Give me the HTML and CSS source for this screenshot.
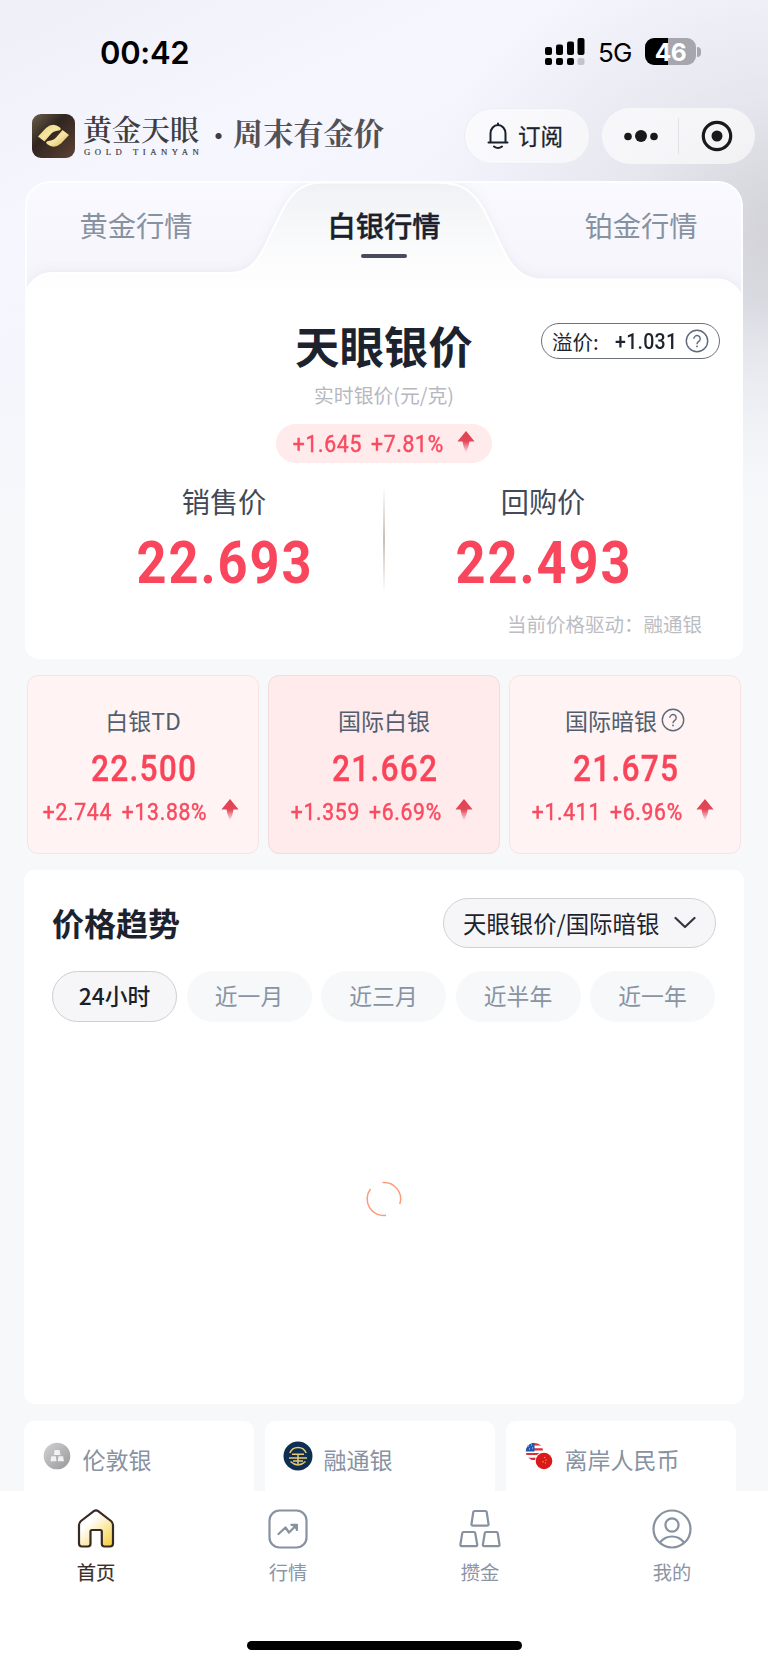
FILE: index.html
```html
<!DOCTYPE html>
<html lang="zh-CN">
<head>
<meta charset="utf-8">
<title>黄金天眼</title>
<link rel="stylesheet" href="styles.css">
</head>
<body>
<svg class="defs" width="0" height="0" aria-hidden="true">
  <defs>
    <linearGradient id="arrow-fill" x1="0" y1="0" x2="0" y2="1"><stop offset="0" stop-color="#e2404f"/><stop offset=".48" stop-color="#e2485a"/><stop offset="1" stop-color="#e2485a" stop-opacity="0"/></linearGradient>
    <symbol id="arrow" viewBox="0 0 18 22"><path d="M9 0 17.600 10.500H12.500Q11.800 16 9 22 6.200 16 5.500 10.500H.4Z" fill="url(#arrow-fill)"/></symbol>
    <symbol id="help" viewBox="0 0 24 24"><circle cx="12" cy="12" r="10.700" fill="none" stroke="#5b697b" stroke-width="1.400"/><path d="M8.800 9.700a3.200 3.200 0 1 1 5 2.700c-1.300.9-1.800 1.400-1.800 2.800" fill="none" stroke="#5b697b" stroke-width="1.400"/><circle cx="12" cy="17.400" r=".9" fill="#5b697b"/></symbol>
  </defs>
</svg>
<div class="screen">
  <div class="status">
    <span class="time">00:42</span>
    <div class="status-right">
      <svg width="40" height="28" viewBox="0 0 40 28"><rect x="0" y="9" width="7" height="8" rx="2"/><rect x="11" y="6.500" width="7" height="10.500" rx="2"/><rect x="22" y="3.500" width="7" height="13.500" rx="2"/><rect x="32.500" y="0" width="7" height="17" rx="2"/><rect x="0" y="20" width="7" height="7" rx="2"/><rect x="11" y="20" width="7" height="7" rx="2"/><rect x="22" y="20" width="7" height="7" rx="2"/><rect x="32.500" y="20" width="7" height="7" rx="2" fill="#c3c3cc"/></svg>
      <span class="net">5G</span>
      <span class="battery">46</span><i class="battery-cap"></i>
    </div>
  </div>

  <header class="header">
    <svg class="logo" width="43" height="44" viewBox="0 0 43 44">
      <defs><linearGradient id="logo-bg" x1="0" y1="0" x2="1" y2="1"><stop offset="0" stop-color="#6b5f4b"/><stop offset=".4" stop-color="#30251f"/><stop offset="1" stop-color="#5d4335"/></linearGradient><linearGradient id="gold" x1="0" y1="0" x2="1" y2="1"><stop offset="0" stop-color="#e9cf6a"/><stop offset=".5" stop-color="#f6e6a6"/><stop offset="1" stop-color="#d6ab3c"/></linearGradient></defs>
      <rect width="43" height="44" rx="9" fill="url(#logo-bg)"/>
      <path d="M6 22.500 14 14Q21 8 28 13.500 30 15.500 27 16.500 21 17 18.500 20.500L12.500 27.500Z" fill="url(#gold)"/>
      <path d="M37 21 29 29.500Q22 35.500 15 30 13 28 16 27 22 26.500 24.500 23L30.500 16Z" fill="url(#gold)"/>
    </svg>
    <div class="brand"><span class="brand-cn">黄金天眼</span><span class="brand-en">GOLD TIANYAN</span></div>
    <span class="brand-dot">·</span>
    <span class="slogan">周末有金价</span>
    <div class="subscribe">
      <svg width="22" height="28" viewBox="0 0 22 28" fill="none" stroke="#17202b" stroke-width="2" stroke-linecap="round" stroke-linejoin="round"><path d="M11 1.500V3M3.500 20V11.500a7.500 8.500 0 0 1 15 0V20M1.500 20.500h19M7 24.500q4 3 8 0"/></svg>
      <span>订阅</span>
    </div>
    <div class="capsule">
      <svg width="34" height="14" viewBox="0 0 34 14" fill="#191919"><circle cx="4" cy="7.500" r="3.800"/><circle cx="17" cy="7" r="6"/><circle cx="30" cy="7.500" r="3.800"/></svg>
      <i class="capsule-line"></i>
      <svg width="32" height="32" viewBox="0 0 32 32"><circle cx="16" cy="16" r="13.700" fill="none" stroke="#191919" stroke-width="3.200"/><circle cx="16" cy="16" r="5.500" fill="#191919"/></svg>
    </div>
  </header>

  <main class="content">
    <section class="hero">
      <svg class="hero-bg" width="718" height="140" viewBox="0 0 718 140">
        <defs>
          <linearGradient id="back" x1="0" y1="0" x2="0" y2="1"><stop offset="0" stop-color="#faf9ff"/><stop offset="1" stop-color="#f4f3fa"/></linearGradient>
          <linearGradient id="front" x1="0" y1="0" x2="0" y2="140" gradientUnits="userSpaceOnUse"><stop offset="0" stop-color="#f0f1f4"/><stop offset=".35" stop-color="#f7f8f9"/><stop offset=".62" stop-color="#fdfdfe"/><stop offset=".85" stop-color="#fff"/></linearGradient>
          <filter id="soft" x="-5%" y="-20%" width="110%" height="140%"><feDropShadow dx="0" dy="-2" stdDeviation="4" flood-color="#8f8bb0" flood-opacity=".1"/></filter>
          <clipPath id="hero-clip"><path d="M0 140V25A25 25 0 0 1 25 0H693A25 25 0 0 1 718 25V140Z"/></clipPath>
        </defs>
        <g clip-path="url(#hero-clip)">
          <path d="M0 140V25A25 25 0 0 1 25 0H693A25 25 0 0 1 718 25V140Z" fill="url(#back)"/>
          <path d="M0 140V118A27 27 0 0 1 27 92H204C222 92 231 83 239 67C247 51 253 37 261 23C270 8 281 1.500 298 1.500H408C430 1.500 444 5 456 24C466 41 473 60 482 76C490 90 500 98.500 516 98.500H692A26 26 0 0 1 718 122V140Z" fill="url(#front)" stroke="#fff" stroke-width="2" filter="url(#soft)"/>
        </g>
        <path d="M1 118V25A24 24 0 0 1 25 1H693A24 24 0 0 1 717 25V118" fill="none" stroke="#fff" stroke-width="1.600"/>
      </svg>
      <nav class="tabs"><span>黄金行情</span><span class="tab-on">白银行情</span><span>铂金行情</span></nav>
      <div class="title-row">
        <h1>天眼银价</h1>
        <div class="premium"><span>溢价:</span><b>+1.031</b><svg width="24" height="24"><use href="#help"/></svg></div>
      </div>
      <p class="unit">实时银价(元/克)</p>
      <div class="change change-pill"><span>+1.645</span><span>+7.81%</span><svg width="18" height="22"><use href="#arrow"/></svg></div>
      <div class="prices">
        <div class="price"><span>销售价</span><strong>22.693</strong></div>
        <i class="price-line"></i>
        <div class="price"><span>回购价</span><strong>22.493</strong></div>
      </div>
      <p class="driver">当前价格驱动：融通银</p>
    </section>

    <section class="quotes">
      <article class="quote"><h3>白银TD</h3><strong>22.500</strong><div class="change"><span>+2.744</span><span>+13.88%</span><svg width="18" height="22"><use href="#arrow"/></svg></div></article>
      <article class="quote quote-on"><h3>国际白银</h3><strong>21.662</strong><div class="change"><span>+1.359</span><span>+6.69%</span><svg width="18" height="22"><use href="#arrow"/></svg></div></article>
      <article class="quote"><h3>国际暗银<svg width="24" height="24"><use href="#help"/></svg></h3><strong>21.675</strong><div class="change"><span>+1.411</span><span>+6.96%</span><svg width="18" height="22"><use href="#arrow"/></svg></div></article>
    </section>

    <section class="trend">
      <div class="trend-head"><h2>价格趋势</h2>
        <div class="select"><span>天眼银价/国际暗银</span><svg width="22" height="14" viewBox="0 0 22 14" fill="none" stroke="#33363f" stroke-width="2.200" stroke-linecap="round" stroke-linejoin="round"><path d="M1.500 2 11 11 20.500 2"/></svg></div>
      </div>
      <div class="chips"><span class="chip chip-on">24小时</span><span class="chip">近一月</span><span class="chip">近三月</span><span class="chip">近半年</span><span class="chip">近一年</span></div>
      <div class="chart"><svg width="36" height="36" viewBox="0 0 36 36" fill="none" stroke="#fb9b78" stroke-width="1.500"><path d="M16.500 1.600A16.500 16.500 0 0 1 33.800 23"/><path d="M20 34.300A16.500 16.500 0 0 1 4.500 8"/></svg></div>
    </section>

    <section class="markets">
      <article class="market">
        <svg width="30" height="30" viewBox="0 0 30 30"><defs><linearGradient id="silver" x1="0" y1="0" x2="1" y2="1"><stop offset="0" stop-color="#d2d2d4"/><stop offset="1" stop-color="#98989b"/></linearGradient></defs><circle cx="15" cy="15" r="13.300" fill="url(#silver)"/><path d="M12.700 9h4.800l1 5h-6.800ZM9.300 15.200h4.500l.7 5H8.400ZM16.500 15.200H21l1 5h-6.200Z" fill="#f1f1f2"/></svg><span>伦敦银</span>
      </article>
      <article class="market">
        <svg width="30" height="30" viewBox="0 0 30 30" fill="none" stroke="#e8c874" stroke-width="1.500"><circle cx="15" cy="15" r="14.500" fill="#0e2e52" stroke="none"/><path d="M6.800 12a8.800 8.800 0 0 1 16.400 0M9 13.200h12M6 17h18M15 13v10M10 20h10M7.500 20.500q7.500 7 15 0"/></svg><span>融通银</span>
      </article>
      <article class="market">
        <svg width="30" height="30" viewBox="0 0 30 30"><defs><clipPath id="us"><circle cx="10.500" cy="10.500" r="8.700"/></clipPath></defs><g clip-path="url(#us)"><path fill="#fff" d="M1 1h20v20H1z"/><path d="M1 3.300h19M1 8.300h19M1 13h19M1 17.800h19" stroke="#dc2c35" stroke-width="2.200"/><path fill="#1d57b5" d="M1 1h9.500v9.500H1z"/><path d="M4 5h.8M7 4h.8M5 8h.8M8 7h.8" stroke="#fff"/></g><circle cx="20" cy="20" r="9.200" fill="#fff"/><circle cx="20" cy="20" r="8.300" fill="#d91a1a"/><path d="M20 16.500h1.200M22 18.500v1.200M21.500 21.500v1M19 20v1.500" stroke="#f1bd35"/></svg><span>离岸人民币</span>
      </article>
    </section>
  </main>

  <footer class="tabbar">
    <div class="tab-item tab-home"><svg width="42" height="42" viewBox="0 0 42 42"><defs><linearGradient id="home" x1=".2" y1=".1" x2="1" y2="1"><stop offset=".2" stop-color="#fff"/><stop offset="1" stop-color="#f6cd33"/></linearGradient></defs><path d="M18.800 3.200Q21 1.500 23.200 3.200L36 13Q38 14.700 38 17V35.500Q38 38.500 35 38.500H29.500Q26.800 38.500 26.800 35.800V23.500Q26.800 22 25.300 22H17Q15.500 22 15.500 23.500V35.800Q15.500 38.500 12.800 38.500H7Q4 38.500 4 35.500V17Q4 14.700 6 13Z" fill="url(#home)" stroke="#372a25" stroke-width="2.200"/></svg><span>首页</span></div>
    <div class="tab-item"><svg width="42" height="42" viewBox="0 0 42 42" fill="none" stroke="#8792a1" stroke-width="2.200"><rect x="2.500" y="2.500" width="37" height="37" rx="10"/><path d="M11.500 26 18.500 19.500 22 24.500 29 17.500M24.500 16.800H29.800V22" stroke-linejoin="round" stroke-linecap="round"/><path d="M26 17H29.700V20.500Z" fill="#8792a1"/></svg><span>行情</span></div>
    <div class="tab-item"><svg width="42" height="42" viewBox="0 0 42 42" fill="none" stroke="#8792a1" stroke-width="2.200" stroke-linejoin="round"><path d="M15.500 3H26.500Q27.500 3 27.700 4L29.500 16Q29.700 17.700 28 17.700H14Q12.300 17.700 12.500 16L14.300 4Q14.500 3 15.500 3Z"/><path d="M4.500 24H15Q16 24 16.200 25L18.200 36.500Q18.500 38.200 16.800 38.200H2.800Q1.100 38.200 1.400 36.500L3.300 25Q3.500 24 4.500 24Z"/><path d="M27 24H37.500Q38.500 24 38.700 25L40.500 36.500Q40.800 38.200 39.100 38.200H25.300Q23.600 38.200 23.900 36.500L25.800 25Q26 24 27 24Z"/></svg><span>攒金</span></div>
    <div class="tab-item"><svg width="42" height="42" viewBox="0 0 42 42" fill="none" stroke="#8792a1" stroke-width="2.200"><circle cx="21" cy="21" r="18.500"/><circle cx="21" cy="17" r="6.600"/><path d="M9 34.500Q13.500 28.500 21 28.500T33 34.500"/></svg><span>我的</span></div>
    <i class="home-indicator"></i>
  </footer>
</div>
</body>
</html>
```

FILE: styles.css
```css
* { box-sizing: border-box; margin: 0; padding: 0; }
body { width: 768px; height: 1665px; overflow: hidden; font-family: "Noto Sans CJK SC", sans-serif; color: #1d232e; }
i { font-style: normal; }
svg { flex: none; display: block; }
.defs { position: absolute; }
.screen {
  width: 768px; height: 1665px; display: flex; flex-direction: column;
  background:
    linear-gradient(to bottom, rgba(247,248,250,0) 300px, #f6f8fa 500px),
    radial-gradient(380px 300px at 800px 230px, rgba(198,198,202,.75), rgba(214,214,220,.45) 45%, rgba(230,230,240,0)),
    linear-gradient(155deg, #efeff8 0, #f6f6fe 220px, #f3f3fd 420px, #e9e9f4 600px, #f2f3f8 900px);
}
.status { flex: none; height: 104px; display: flex; justify-content: space-between; padding: 34px 67px 0 100px; }
.time { font: 600 31px/37px Inter, sans-serif; letter-spacing: -.3px; color: #000; }
.status-right { display: flex; align-items: flex-start; height: 34px; padding-top: 4px; }
.net { font: 400 26px/30px Inter, sans-serif; margin-left: 13px; width: 36px; letter-spacing: -.8px; color: #000; }
.battery { margin-left: 11px; width: 51px; height: 27px; border-radius: 9px; background: linear-gradient(90deg, #000 46%, #a6a6ae 46%); color: #fff; font: 700 24.500px/28px Inter, sans-serif; letter-spacing: -.5px; text-align: center; }
.battery-cap { width: 4px; height: 10px; margin: 9px 0 0 1px; border-radius: 0 5px 5px 0; background: #a6a6ae; }

.header { flex: none; height: 77px; display: flex; align-items: flex-start; padding: 4px 13px 0 32px; }
.logo { margin-top: 6px; }
.brand { width: 116px; margin: 4px 0 0 8px; display: flex; flex-direction: column; font-family: "Noto Serif CJK SC", "Noto Sans CJK SC", serif; color: #3d3d42; }
.brand-cn { font-size: 29px; line-height: 34px; font-weight: 600; white-space: nowrap; }
.brand-en { font: 400 8.700px/10px "Liberation Serif", serif; letter-spacing: 4.550px; white-space: nowrap; margin: 1px 0 0 1px; -webkit-text-stroke: .2px #3d3d42; }
.brand-dot { width: 34px; padding-left: 5px; text-align: center; font-size: 24px; line-height: 54px; font-weight: 700; color: #3d3d42; }
.slogan { font: 700 30.200px/36px "Noto Serif CJK SC", "Noto Sans CJK SC", serif; color: #515156; margin-top: 6px; white-space: nowrap; }
.subscribe { margin-left: auto; width: 126px; height: 56px; border-radius: 28px; background: rgba(255,255,255,.6); border: 1px solid rgba(225,225,235,.55); display: flex; align-items: center; padding-left: 22px; gap: 9px; font-size: 22.500px; line-height: 28px; font-weight: 400; -webkit-text-stroke: .3px #1d232e; }
.subscribe span { margin-top: -2px; }
.capsule { margin-left: 12px; width: 153px; height: 56px; border-radius: 28px; background: rgba(255,255,255,.62); display: flex; align-items: center; padding-left: 22px; }
.capsule-line { width: 1px; height: 36px; background: #e1e1e6; margin: 0 22px 0 20px; }

.content { height: 1310px; flex: none; overflow: hidden; }
.hero { position: relative; margin-left: 25px; width: 718px; height: 478px; border-radius: 25px 25px 14px 14px; background: linear-gradient(rgba(255,255,255,0) 130px, #fff 130px); }
.hero-bg { position: absolute; left: 0; top: 0; }
.tabs { position: relative; height: 118px; display: grid; grid-template-columns: 222px 1fr 204px; text-align: center; font-size: 28.300px; line-height: 36px; padding-top: 26px; color: #8792a0; }
.tab-on { position: relative; color: #1b212c; font-weight: 500; width: 274px; -webkit-text-stroke: .4px #1b212c; }
.tab-on::after { content: ""; position: absolute; left: 114px; top: 46.500px; width: 46px; height: 4px; border-radius: 2px; background: #4a4a5d; }
.title-row { position: relative; height: 82px; display: grid; grid-template-columns: 1fr 178px 1fr; }
h1 { grid-column: 2; font-size: 44.400px; line-height: 60px; font-weight: 700; margin-top: 16px; white-space: nowrap; }
.premium { justify-self: end; margin: 24px 23px 0 0; width: 179px; height: 36px; border: 1px solid #6c7078; border-radius: 18px; display: flex; align-items: center; padding-left: 10px; font-size: 20.500px; line-height: 30px; }
.premium b { font: 500 22.500px/30px Roboto, sans-serif; letter-spacing: .3px; margin-left: 16px; width: 62px; transform: scaleX(.87); transform-origin: left; white-space: nowrap; }
.premium svg { margin-left: 8px; }
.unit { text-align: center; font-size: 19.800px; line-height: 28px; color: #b7b8bf; }
.change { display: flex; justify-content: center; font: 400 24px/30px Roboto, sans-serif; letter-spacing: .8px; color: #f94b60; -webkit-text-stroke: .5px #f94b60; }
.change span { transform: scaleX(.88); margin: 0 -.2em; }
.change span + span { margin-left: 4px; }
.change svg { margin: 2px 0 0 13px; }
.change-pill { width: 216px; height: 39px; border-radius: 20px; margin: 15px auto 1px; background: #ffebec; padding-top: 5px; }
.prices { display: grid; grid-template-columns: 317px 2px 317px; justify-content: center; padding-top: 18px; margin-left: -1px; }
.price { display: flex; flex-direction: column; align-items: center; font-size: 28.200px; line-height: 38px; color: #434957; }
.price strong { font: 700 58.500px/60px Roboto, sans-serif; letter-spacing: 2.200px; transform: scaleX(.895); color: #f9465c; margin: 13px 0 0 2px; }
.price-line { width: 2px; height: 106px; margin-top: 4px; background: linear-gradient(#fff, #cbbfb6 50%, #fff); }
.driver { text-align: right; padding-right: 41px; font-size: 19.500px; line-height: 28px; margin-top: 17px; color: #bcbdc3; }

.quotes { margin: 16px 0 0 27px; display: grid; grid-template-columns: repeat(3, 232px); gap: 9px; }
.quote { height: 179px; border: 1px solid #f7e3e4; border-radius: 11px; background: #fff4f3; display: flex; flex-direction: column; align-items: center; padding-top: 28px; }
.quote-on { background: #ffebeb; border-color: #f1dcde; }
.quote h3 { display: flex; align-items: center; gap: 4px; font-size: 23px; line-height: 32px; font-weight: 400; color: #525e6f; }
.quote strong { font: 500 36.500px/44px Roboto, sans-serif; letter-spacing: 1.400px; transform: scaleX(.87); -webkit-text-stroke: .3px #f94459; color: #f94459; margin: 11px 0 0 2px; }
.quote .change { margin: 6px 4px 0 0; }

.trend { margin: 16px 0 0 24px; width: 720px; height: 534px; border-radius: 11px; background: #fff; padding: 28px 28px 0; }
.trend-head { display: flex; justify-content: space-between; height: 73px; }
h2 { font-size: 32px; line-height: 48px; font-weight: 700; }
.select { width: 273px; height: 50px; border: 1px solid #d1d1d5; border-radius: 25px; background: #f6f6f8; display: flex; align-items: center; padding-left: 19px; font-size: 23.400px; line-height: 32px; }
.select span { width: 198px; white-space: nowrap; margin-top: -1px; }
.select svg { margin-left: 13px; }
.chips { display: grid; grid-template-columns: repeat(5, 125px); gap: 9.500px; }
.chip { height: 51px; border-radius: 26px; background: #f6f8fa; text-align: center; font-size: 22.800px; line-height: 50px; color: #8894a2; }
.chip-on { border: 1px solid #cecfd3; background: #f6f6f8; color: #1b212c; font-weight: 500; line-height: 48px; }
.chart { display: flex; justify-content: center; padding-top: 159px; }

.markets { margin: 17px 0 0 23.500px; display: grid; grid-template-columns: repeat(3, 230px); gap: 11px; }
.market { height: 110px; border-radius: 11px; background: #fff; display: flex; align-items: flex-start; padding: 20px 0 0 18.500px; gap: 10.500px; font-size: 23px; line-height: 34px; color: #8792a2; }
.market span { margin-top: 1px; }

.tabbar { flex: none; height: 174px; background: #fff; display: grid; grid-template-columns: repeat(4, 192px); grid-template-rows: 133px 9px; padding-top: 17px; }
.tab-item { display: flex; flex-direction: column; align-items: center; color: #8b95a3; font-size: 19.300px; line-height: 28px; gap: 8px; }
.tab-home { color: #3b2d28; -webkit-text-stroke: .2px #3b2d28; }
.home-indicator { grid-column: 1 / -1; justify-self: center; width: 275px; height: 9px; border-radius: 5px; background: #000; }
```
